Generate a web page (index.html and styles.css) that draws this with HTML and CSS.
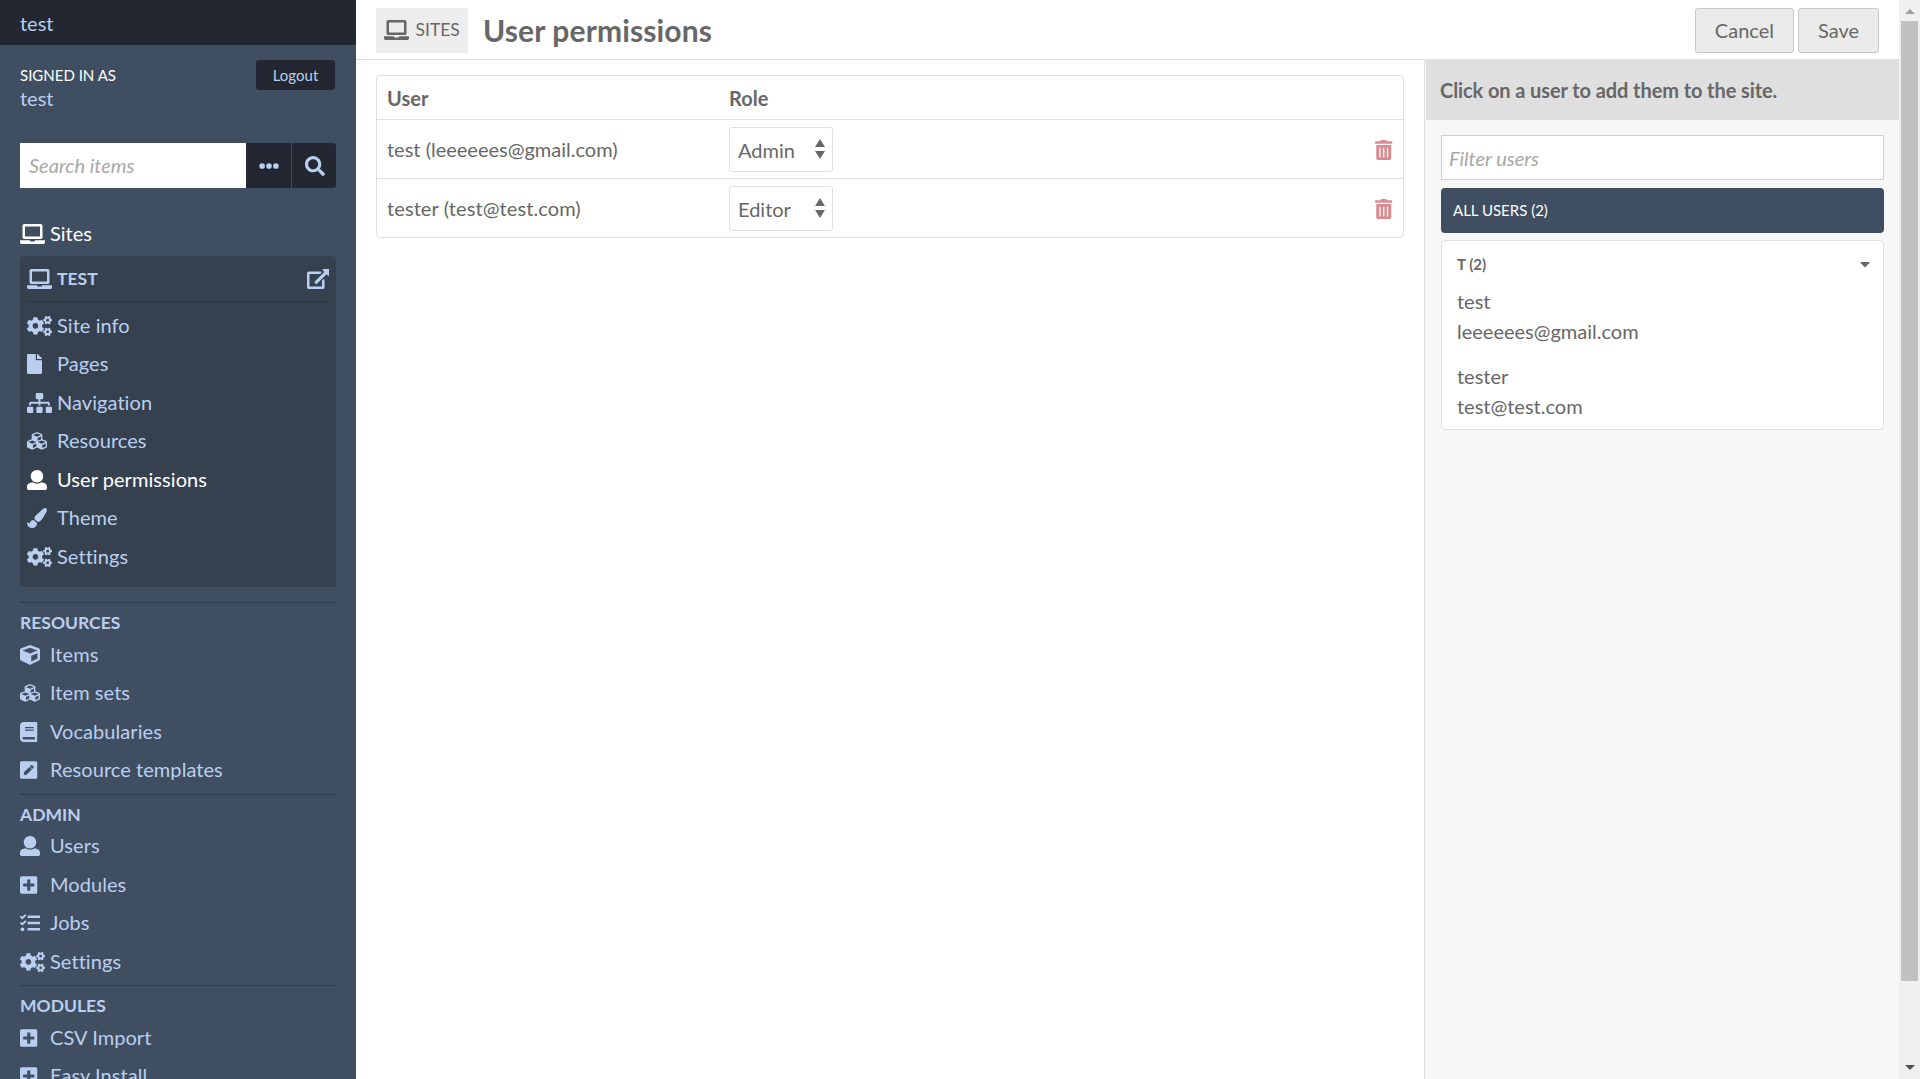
FILE: index.html
```html
<!DOCTYPE html>
<html lang="en">
<head>
<meta charset="utf-8">
<title>User permissions · test</title>
<link rel="stylesheet" href="styles.css">
</head>
<body>
<svg class="sprite" aria-hidden="true">
  <symbol id="laptop" viewBox="0 0 640 512"><path d="M512 64v256H128V64h384m16-64H112C85.500 0 64 21.500 64 48v288c0 26.500 21.500 48 48 48h416c26.500 0 48-21.500 48-48V48c0-26.500-21.500-48-48-48zm100 416H389.500c-3 0-5.500 2.100-5.900 5.100C381.200 436.300 368 448 352 448h-64c-16 0-29.200-11.700-31.600-26.900-.5-2.900-3-5.100-5.900-5.100H12c-6.600 0-12 5.400-12 12v36c0 26.500 21.500 48 48 48h544c26.500 0 48-21.500 48-48v-36c0-6.600-5.400-12-12-12z"/></symbol>
  <symbol id="external" viewBox="0 0 576 512"><path d="M576 24v127.984c0 21.461-25.960 31.980-40.971 16.971l-35.707-35.709-243.523 243.523c-9.373 9.373-24.568 9.373-33.941 0l-22.627-22.627c-9.373-9.373-9.373-24.569 0-33.941L442.756 76.676l-35.703-35.705C391.982 25.900 402.656 0 424.024 0H552c13.255 0 24 10.745 24 24zM407.029 270.794l-16 16A23.999 23.999 0 0 0 384 303.765V448H64V128h264a24.003 24.003 0 0 0 16.970-7.029l16-16C376.089 89.851 365.381 64 344 64H48C21.490 64 0 85.490 0 112v352c0 26.510 21.490 48 48 48h352c26.510 0 48-21.490 48-48V287.764c0-21.382-25.852-32.090-40.971-16.970z"/></symbol>
  <symbol id="cogs" viewBox="0 0 640 512"><path d="M512.1 191l-8.2 14.3c-3 5.3-9.4 7.5-15.1 5.4-11.8-4.4-22.6-10.7-32.1-18.6-4.6-3.8-5.8-10.5-2.8-15.7l8.2-14.3c-6.9-8-12.3-17.3-15.9-27.4h-16.5c-6 0-11.2-4.3-12.2-10.3-2-12-2.1-24.6 0-37.1 1-6 6.2-10.4 12.2-10.4h16.5c3.6-10.1 9-19.4 15.9-27.4l-8.2-14.3c-3-5.2-1.9-11.9 2.8-15.7 9.5-7.9 20.4-14.2 32.1-18.6 5.700-2.100 12.100.1 15.100 5.400l8.200 14.300c10.500-1.900 21.200-1.900 31.700 0L552 6.300c3-5.300 9.400-7.500 15.100-5.400 11.800 4.400 22.600 10.700 32.100 18.600 4.600 3.800 5.800 10.500 2.800 15.700l-8.200 14.300c6.900 8 12.300 17.300 15.900 27.400h16.500c6 0 11.200 4.300 12.200 10.300 2 12 2.100 24.600 0 37.100-1 6-6.200 10.400-12.200 10.400h-16.500c-3.600 10.100-9 19.400-15.900 27.400l8.200 14.300c3 5.200 1.900 11.900-2.800 15.700-9.500 7.900-20.400 14.200-32.100 18.600-5.700 2.100-12.100-.1-15.100-5.400l-8.200-14.300c-10.400 1.900-21.200 1.900-31.700 0zm-10.500-58.800c38.500 29.600 82.400-14.300 52.800-52.800-38.500-29.700-82.400 14.300-52.800 52.800zM386.300 286.100l33.700 16.800c10.100 5.800 14.500 18.100 10.500 29.100-8.900 24.200-26.400 46.400-42.600 65.800-7.400 8.900-20.200 11.100-30.300 5.300l-29.100-16.800c-16 13.700-34.600 24.600-54.900 31.700v33.600c0 11.600-8.300 21.600-19.700 23.600-24.600 4.200-50.400 4.400-75.900 0-11.500-2-20-11.900-20-23.600V418c-20.300-7.200-38.900-18-54.900-31.700L74 403c-10 5.800-22.900 3.600-30.300-5.300-16.200-19.400-33.300-41.600-42.200-65.700-4-10.900.4-23.200 10.500-29.100l33.300-16.800c-3.900-20.900-3.900-42.400 0-63.400L12 205.800c-10.100-5.800-14.600-18.100-10.500-29 8.900-24.200 26-46.400 42.200-65.800 7.400-8.900 20.200-11.100 30.300-5.300l29.100 16.800c16-13.700 34.600-24.600 54.900-31.700V57.100c0-11.500 8.200-21.500 19.600-23.500 24.600-4.200 50.500-4.400 76-.1 11.500 2 20 11.900 20 23.600v33.600c20.300 7.200 38.900 18 54.900 31.700l29.100-16.800c10-5.800 22.900-3.600 30.300 5.300 16.200 19.400 33.200 41.600 42.100 65.800 4 10.900.1 23.200-10 29.100l-33.700 16.800c3.900 21 3.900 42.500 0 63.500zm-117.600 21.100c59.200-77-28.700-164.900-105.700-105.700-59.200 77 28.700 164.900 105.700 105.700zm243.400 182.700l-8.200 14.300c-3 5.300-9.400 7.500-15.100 5.400-11.800-4.400-22.600-10.700-32.100-18.600-4.600-3.800-5.800-10.500-2.800-15.700l8.200-14.300c-6.900-8-12.300-17.300-15.900-27.400h-16.500c-6 0-11.200-4.300-12.200-10.300-2-12-2.100-24.600 0-37.100 1-6 6.200-10.400 12.200-10.400h16.500c3.600-10.100 9-19.400 15.900-27.400l-8.200-14.300c-3-5.200-1.900-11.900 2.800-15.700 9.500-7.900 20.400-14.200 32.100-18.600 5.700-2.100 12.100.1 15.100 5.400l8.200 14.300c10.500-1.900 21.200-1.900 31.700 0l8.200-14.300c3-5.300 9.400-7.500 15.100-5.400 11.800 4.400 22.600 10.700 32.100 18.600 4.600 3.800 5.800 10.500 2.800 15.700l-8.200 14.300c6.900 8 12.300 17.300 15.900 27.400h16.500c6 0 11.200 4.300 12.200 10.300 2 12 2.100 24.600 0 37.100-1 6-6.200 10.400-12.200 10.400h-16.500c-3.600 10.100-9 19.400-15.900 27.400l8.200 14.300c3 5.200 1.900 11.900-2.800 15.700-9.500 7.900-20.400 14.200-32.100 18.600-5.700 2.100-12.100-.1-15.100-5.400l-8.200-14.300c-10.400 1.900-21.200 1.900-31.700 0zM501.600 431c38.500 29.600 82.400-14.300 52.800-52.800-38.500-29.600-82.400 14.300-52.800 52.800z"/></symbol>
  <symbol id="file" viewBox="0 0 384 512"><path d="M224 136V0H24C10.700 0 0 10.700 0 24v464c0 13.300 10.700 24 24 24h336c13.300 0 24-10.700 24-24V160H248c-13.200 0-24-10.800-24-24zm160-14.100v6.100H256V0h6.100c6.400 0 12.500 2.500 17 7l97.900 98c4.500 4.500 7 10.600 7 16.900z"/></symbol>
  <symbol id="sitemap" viewBox="0 0 640 512"><path d="M128 352H32c-17.670 0-32 14.330-32 32v96c0 17.670 14.330 32 32 32h96c17.670 0 32-14.330 32-32v-96c0-17.670-14.330-32-32-32zm-24-80h192v48h48v-48h192v48h48v-57.590c0-21.170-17.230-38.410-38.410-38.410H344v-64h40c17.670 0 32-14.330 32-32V32c0-17.670-14.330-32-32-32H256c-17.670 0-32 14.330-32 32v96c0 17.670 14.330 32 32 32h40v64H94.410C73.230 224 56 241.230 56 262.410V320h48v-48zm264 80h-96c-17.670 0-32 14.330-32 32v96c0 17.670 14.330 32 32 32h96c17.670 0 32-14.330 32-32v-96c0-17.670-14.330-32-32-32zm240 0h-96c-17.670 0-32 14.330-32 32v96c0 17.670 14.330 32 32 32h96c17.670 0 32-14.330 32-32v-96c0-17.670-14.330-32-32-32z"/></symbol>
  <symbol id="cubes" viewBox="0 0 512 512"><path d="M488.600 250.200L392 214V105.500c0-15-9.300-28.400-23.400-33.700l-100-37.500c-8.100-3.100-17.100-3.100-25.300 0l-100 37.500c-14.100 5.300-23.400 18.700-23.400 33.700V214l-96.600 36.200C9.300 255.500 0 268.900 0 283.900V394c0 13.600 7.700 26.100 19.900 32.200l100 50c10.100 5.100 22.100 5.100 32.200 0l103.900-52 103.900 52c10.100 5.100 22.100 5.100 32.200 0l100-50c12.200-6.100 19.900-18.600 19.900-32.200V283.900c0-15-9.300-28.400-23.400-33.700zM358 214.800l-85 31.900v-68.200l85-37v73.300zM154 104.100l102-38.200 102 38.200v.6l-102 41.400-102-41.400v-.6zm84 291.100l-85 42.500v-79.100l85-38.800v75.400zm0-112l-102 41.400-102-41.400v-.6l102-38.200 102 38.200v.6zm240 112l-85 42.500v-79.100l85-38.800v75.400zm0-112l-102 41.400-102-41.400v-.6l102-38.200 102 38.200v.6z"/></symbol>
  <symbol id="cube" viewBox="0 0 512 512"><path d="M239.100 6.300l-208 78c-18.700 7-31.100 25-31.100 45v225.100c0 18.200 10.300 34.800 26.500 42.900l208 104c13.500 6.800 29.400 6.800 42.900 0l208-104c16.300-8.100 26.500-24.800 26.500-42.900V129.300c0-20-12.400-37.900-31.100-44.900l-208-78C262 2.200 250 2.200 239.100 6.300zM256 68.400l192 72v1.100l-192 78-192-78v-1.100l192-72zm32 356V275.500l160-65v133.900l-160 80z"/></symbol>
  <symbol id="user" viewBox="0 0 512 512"><path d="M256 0c88.366 0 160 71.634 160 160s-71.634 160-160 160S96 248.366 96 160 167.634 0 256 0zm183.283 333.821l-71.313-17.828c-74.923 53.890-165.738 41.864-223.940 0l-71.313 17.828C29.981 344.505 0 382.903 0 426.955V464c0 26.510 21.490 48 48 48h416c26.510 0 48-21.490 48-48v-37.045c0-44.052-29.981-82.450-72.717-93.134z"/></symbol>
  <symbol id="brush" viewBox="0 0 512 512"><path d="M167.020 309.340c-40.120 2.580-76.530 17.860-97.190 72.300-2.350 6.210-8 9.980-14.590 9.980-11.110 0-45.460-27.670-55.250-34.350C0 439.620 37.930 512 128 512c75.860 0 128-43.770 128-120.190 0-3.110-.65-6.080-.97-9.130l-88.010-73.340zM457.890 0c-15.160 0-29.370 6.710-40.210 16.450C213.270 199.050 192 203.340 192 257.090c0 13.700 3.250 26.760 8.730 38.700l63.820 53.180c7.210 1.800 14.640 3.030 22.390 3.030 62.110 0 98.110-45.470 211.160-256.460 7.380-14.350 13.900-29.850 13.900-45.990C512 20.640 486 0 457.890 0z"/></symbol>
  <symbol id="book" viewBox="0 0 448 512"><path d="M448 360V24c0-13.300-10.700-24-24-24H96C43 0 0 43 0 96v320c0 53 43 96 96 96h328c13.300 0 24-10.700 24-24v-16c0-7.500-3.500-14.300-8.900-18.700-4.200-15.400-4.200-59.300 0-74.700 5.400-4.300 8.900-11.100 8.900-18.600zM128 134c0-3.300 2.700-6 6-6h212c3.300 0 6 2.700 6 6v20c0 3.300-2.700 6-6 6H134c-3.300 0-6-2.700-6-6v-20zm0 64c0-3.300 2.700-6 6-6h212c3.300 0 6 2.700 6 6v20c0 3.300-2.700 6-6 6H134c-3.300 0-6-2.700-6-6v-20zm253.400 250H96c-17.700 0-32-14.300-32-32 0-17.600 14.400-32 32-32h285.400c-1.900 17.100-1.900 46.900 0 64z"/></symbol>
  <symbol id="pen" viewBox="0 0 448 512"><path d="M400 480H48c-26.500 0-48-21.500-48-48V80c0-26.500 21.500-48 48-48h352c26.500 0 48 21.500 48 48v352c0 26.500-21.500 48-48 48zM238.100 177.900L102.400 313.600l-6.300 57.100c-.8 7.600 5.600 14.100 13.300 13.300l57.100-6.300L302.200 242c2.300-2.300 2.300-6.100 0-8.500L246.700 178c-2.500-2.400-6.300-2.400-8.600-.1zM345 165.100L314.900 135c-9.400-9.400-24.600-9.400-33.900 0l-23.100 23.100c-2.300 2.300-2.300 6.100 0 8.500l55.500 55.500c2.300 2.300 6.100 2.300 8.500 0L345 199c9.300-9.300 9.300-24.500 0-33.900z"/></symbol>
  <symbol id="plus" viewBox="0 0 448 512"><path d="M400 32H48C21.500 32 0 53.500 0 80v352c0 26.500 21.500 48 48 48h352c26.500 0 48-21.500 48-48V80c0-26.500-21.500-48-48-48zm-32 252c0 6.600-5.400 12-12 12h-92v92c0 6.600-5.400 12-12 12h-56c-6.600 0-12-5.400-12-12v-92H92c-6.600 0-12-5.400-12-12v-56c0-6.600 5.400-12 12-12h92v-92c0-6.600 5.400-12 12-12h56c6.600 0 12 5.400 12 12v92h92c6.600 0 12 5.400 12 12v56z"/></symbol>
  <symbol id="tasks" viewBox="0 0 512 512"><path d="M139.610 35.500a12 12 0 0 0-17 0L58.930 98.810l-22.700-22.120a12 12 0 0 0-17 0L3.530 92.410a12 12 0 0 0 0 17l47.590 47.400a12.780 12.780 0 0 0 17.610 0l15.590-15.620L156.520 69a12.090 12.090 0 0 0 .09-17zm0 159.190a12 12 0 0 0-17 0l-63.680 63.720-22.700-22.100a12 12 0 0 0-17 0L3.530 252a12 12 0 0 0 0 17L51 316.500a12.770 12.770 0 0 0 17.600 0l15.700-15.690 72.200-72.220a12 12 0 0 0 .09-16.900zM64 368c-26.490 0-48.590 21.500-48.590 48S37.530 464 64 464a48 48 0 0 0 0-96zm432 16H208a16 16 0 0 0-16 16v32a16 16 0 0 0 16 16h288a16 16 0 0 0 16-16v-32a16 16 0 0 0-16-16zm0-320H208a16 16 0 0 0-16 16v32a16 16 0 0 0 16 16h288a16 16 0 0 0 16-16V80a16 16 0 0 0-16-16zm0 160H208a16 16 0 0 0-16 16v32a16 16 0 0 0 16 16h288a16 16 0 0 0 16-16v-32a16 16 0 0 0-16-16z"/></symbol>
  <symbol id="search" viewBox="0 0 512 512"><path d="M505 442.700L405.300 343c-4.500-4.500-10.600-7-17-7H372c27.600-35.300 44-79.700 44-128C416 93.100 322.900 0 208 0S0 93.100 0 208s93.100 208 208 208c48.300 0 92.700-16.400 128-44v16.300c0 6.400 2.500 12.500 7 17l99.700 99.700c9.400 9.400 24.600 9.400 33.900 0l28.300-28.300c9.400-9.400 9.400-24.600.1-34zM208 336c-70.700 0-128-57.200-128-128 0-70.700 57.200-128 128-128 70.700 0 128 57.200 128 128 0 70.700-57.200 128-128 128z"/></symbol>
  <symbol id="dots" viewBox="0 0 512 512"><circle cx="80" cy="256" r="72"/><circle cx="256" cy="256" r="72"/><circle cx="432" cy="256" r="72"/></symbol>
  <symbol id="trash" viewBox="0 0 448 512"><path d="M0 84V56c0-13.300 10.700-24 24-24h112l9.400-18.700c4-8.200 12.300-13.300 21.400-13.300h114.300c9.100 0 17.400 5.100 21.500 13.300L312 32h112c13.300 0 24 10.700 24 24v28c0 6.600-5.400 12-12 12H12C5.400 96 0 90.600 0 84zm416 56v324c0 26.500-21.500 48-48 48H80c-26.500 0-48-21.500-48-48V140c0-6.600 5.400-12 12-12h360c6.600 0 12 5.400 12 12zm-272 68c0-8.800-7.200-16-16-16s-16 7.200-16 16v224c0 8.800 7.200 16 16 16s16-7.200 16-16V208zm96 0c0-8.800-7.200-16-16-16s-16 7.200-16 16v224c0 8.800 7.200 16 16 16s16-7.200 16-16V208zm96 0c0-8.800-7.200-16-16-16s-16 7.200-16 16v224c0 8.800 7.200 16 16 16s16-7.200 16-16V208z"/></symbol>
  <symbol id="caret" viewBox="0 0 320 512"><path d="M31.300 192h257.300c17.800 0 26.700 21.500 14.100 34.100L174.100 354.800c-7.800 7.800-20.500 7.800-28.300 0L17.200 226.100C4.600 213.500 13.500 192 31.300 192z"/></symbol>
  <symbol id="sort" viewBox="0 0 10 20"><path d="M5 0l5 8H0zM0 12h10l-5 8z"/></symbol>
</svg>
<div class="app">
  <aside class="sidebar">
    <div class="brand">test</div>
    <div class="account">
      <div><div class="signed">SIGNED IN AS</div><div class="name">test</div></div>
      <a class="logout">Logout</a>
    </div>
    <div class="search">
      <div class="search-input">Search items</div>
      <div class="search-btn"><svg class="i20"><use href="#dots"/></svg></div>
      <div class="search-btn last"><svg class="i20"><use href="#search"/></svg></div>
    </div>
    <a class="sites"><svg class="i25"><use href="#laptop"/></svg>Sites</a>
    <div class="site">
      <div class="site-title"><svg class="i25"><use href="#laptop"/></svg><b>TEST</b><svg class="i22"><use href="#external"/></svg></div>
      <a class="nav"><span><svg class="i25"><use href="#cogs"/></svg></span>Site info</a>
      <a class="nav"><span><svg class="i15"><use href="#file"/></svg></span>Pages</a>
      <a class="nav"><span><svg class="i25"><use href="#sitemap"/></svg></span>Navigation</a>
      <a class="nav"><span><svg class="i20"><use href="#cubes"/></svg></span>Resources</a>
      <a class="nav active"><span><svg class="i20"><use href="#user"/></svg></span>User permissions</a>
      <a class="nav"><span><svg class="i20"><use href="#brush"/></svg></span>Theme</a>
      <a class="nav"><span><svg class="i25"><use href="#cogs"/></svg></span>Settings</a>
    </div>
    <div class="group">
      <h4>RESOURCES</h4>
      <a class="nav"><span><svg class="i20"><use href="#cube"/></svg></span>Items</a>
      <a class="nav"><span><svg class="i20"><use href="#cubes"/></svg></span>Item sets</a>
      <a class="nav"><span><svg class="i17"><use href="#book"/></svg></span>Vocabularies</a>
      <a class="nav"><span><svg class="i17"><use href="#pen"/></svg></span>Resource templates</a>
    </div>
    <div class="group">
      <h4>ADMIN</h4>
      <a class="nav"><span><svg class="i20"><use href="#user"/></svg></span>Users</a>
      <a class="nav"><span><svg class="i17"><use href="#plus"/></svg></span>Modules</a>
      <a class="nav"><span><svg class="i20"><use href="#tasks"/></svg></span>Jobs</a>
      <a class="nav"><span><svg class="i25"><use href="#cogs"/></svg></span>Settings</a>
    </div>
    <div class="group">
      <h4>MODULES</h4>
      <a class="nav"><span><svg class="i17"><use href="#plus"/></svg></span>CSV Import</a>
      <a class="nav"><span><svg class="i17"><use href="#plus"/></svg></span>Easy Install</a>
    </div>
  </aside>
  <div class="page">
    <header>
      <a class="crumb"><svg class="i25"><use href="#laptop"/></svg>SITES</a>
      <h1>User permissions</h1>
      <div class="actions"><a class="button">Cancel</a><a class="button">Save</a></div>
    </header>
    <div class="content">
      <main>
        <div class="table">
          <div class="row head"><div>User</div><div>Role</div></div>
          <div class="row"><div>test (leeeeees@gmail.com)</div><div class="select">Admin<svg class="sort"><use href="#sort"/></svg></div><svg class="i17 trash"><use href="#trash"/></svg></div>
          <div class="row"><div class="wide">tester (test@test.com)</div><div class="select">Editor<svg class="sort"><use href="#sort"/></svg></div><svg class="i17 trash"><use href="#trash"/></svg></div>
        </div>
      </main>
      <section class="panel">
        <h3>Click on a user to add them to the site.</h3>
        <div class="panel-body">
          <div class="filter">Filter users</div>
          <div class="all">ALL USERS (2)</div>
          <div class="users">
            <div class="letter">T (2)<svg class="caret"><use href="#caret"/></svg></div>
            <div class="user">test<br>leeeeees@gmail.com</div>
            <div class="user">tester<br>test@test.com</div>
          </div>
        </div>
      </section>
    </div>
  </div>
  <div class="scrollbar"><i class="up"></i><div class="thumb"></div><i class="down"></i></div>
</div>
</body>
</html>
```
FILE: styles.css
```css
* { box-sizing: border-box; }
body { margin: 0; font: 20px/30px Lato, sans-serif; color: #676767; background: #fff; overflow: hidden; }
svg { display: block; fill: currentColor; flex: none; height: 20px; }
.sprite { display: none; }
.i25 { width: 25px; }
.i22 { width: 22.5px; }
.i20 { width: 20px; }
.i17 { width: 17.5px; }
.i15 { width: 15px; }
.app { display: flex; height: 1079px; overflow: hidden; }

.sidebar { width: 356px; flex: none; background: #404e61; color: #bacfef; overflow: hidden; }
.brand { height: 45px; padding: 8px 20px 0; background: #222731; }
.account { display: flex; justify-content: space-between; align-items: flex-start; padding: 15px 21px 0 20px; height: 98px; }
.signed { font-size: 15px; line-height: 30px; color: #fff; }
.name { line-height: 20px; margin-top: -2px; }
.logout { width: 79px; height: 30px; line-height: 30px; font-size: 15px; text-align: center; border-radius: 3px; background: #222731; }
.search { display: flex; margin: 0 20px; height: 45px; }
.search-input { flex: 1; background: #fff; color: #a8a8a8; font-style: italic; padding: 7px 9px; }
.search-btn { width: 45px; display: flex; align-items: center; justify-content: center; background: #222731; }
.search-btn.last { border-left: 1px solid #404e61; border-radius: 0 3px 3px 0; padding-left: 1px; }
.sites { display: flex; align-items: center; gap: 5px; margin: 30px 20px 7px; height: 31px; padding-bottom: 1px; color: #fff; }
.sites svg { margin-top: 2px; }
.site { margin: 0 20px; height: 330.500px; padding: 0 7px; background: #364150; border-radius: 4px; }
.site-title { display: flex; align-items: center; gap: 5px; height: 46px; border-bottom: 1px solid #2c3542; margin-bottom: 4.500px; font-size: 17.500px; }
.site-title .i22 { margin-left: auto; }
.nav { display: flex; align-items: center; height: 38.500px; padding-bottom: 2px; letter-spacing: .06px; }
.nav span { width: 30px; }
.nav svg { margin-top: 1.500px; }
.active { color: #fff; }
.group { margin: 0 20px; height: 191.500px; border-top: 1px solid #313c4b; }
.site + .group { margin-top: 15.500px; }
h4 { margin: 0; height: 32.500px; padding-top: 5px; font-size: 17.500px; }

.page { flex: 1; display: flex; flex-direction: column; }
header { display: flex; align-items: center; height: 60px; padding: 0 20px; border-bottom: 1px solid #dfdfdf; }
.crumb { display: flex; align-items: center; gap: 7px; width: 92px; height: 45px; padding-left: 7.500px; margin-top: 1px; background: #ededed; font-size: 17.500px; }
h1 { margin: 0 0 0 15px; font-size: 30px; letter-spacing: .13px; }
.actions { display: flex; gap: 4px; margin: 1px 0 0 auto; }
.button { height: 45px; line-height: 43px; padding: 0 19px; background: #ebebeb; border: 1px solid #c8c8c8; border-radius: 3px; }
.content { flex: 1; display: flex; }
main { flex: 1; padding: 15px 20px; }
.table { border: 1px solid #dfdfdf; border-radius: 4px; }
.row { display: grid; grid-template-columns: 342px 104px 1fr; align-items: center; height: 59px; padding: 0 10px; border-top: 1px solid #dfdfdf; }
.head { height: 43px; border: 0; font-weight: bold; }
.wide { letter-spacing: .1px; }
.select { display: flex; justify-content: space-between; align-items: center; height: 45px; padding: 2px 7px 0 8px; border: 1px solid #dfdfdf; border-radius: 3px; }
.sort { width: 10px; height: 20px; margin-top: -2px; }
.trash { color: #d98c8f; justify-self: end; margin: 1px .5px 0 0; }

.panel { width: 475px; border-left: 1px solid #dfdfdf; background: #f7f7f7; }
h3 { margin: 0 0 0 1px; height: 60px; padding: 15px 14px; font-size: 20px; line-height: 30px; letter-spacing: -.09px; background: #dfdfdf; }
.panel-body { padding: 15px 15px 0 16px; }
.filter { height: 45px; padding: 7px 7px; background: #fff; border: 1px solid #d0d0d0; color: #a8a8a8; font-style: italic; }
.all { height: 45px; margin: 8px 0 7px; padding: 0 12px; line-height: 44px; font-size: 15px; color: #fff; background: #404e61; border-radius: 4px; }
.users { height: 190px; padding: 8px 14px 0 15px; background: #fff; border: 1px solid #dfdfdf; border-radius: 4px; }
.letter { display: flex; justify-content: space-between; align-items: center; height: 30px; font-size: 15px; font-weight: bold; }
.caret { width: 10px; height: 16px; margin-right: -1px; }
.user { padding: 7px 0 8px; }

.scrollbar { width: 21px; padding: 9px 2px; background: #f0f0f0; display: flex; flex-direction: column; align-items: center; }
.thumb { width: 17px; height: 960px; margin: 7px 0 auto; background: #c1c1c1; }
.up { border: 5px solid transparent; border-top: 0; border-bottom-color: #a0a0a0; }
.down { border: 5px solid transparent; border-bottom: 0; border-top-color: #505050; }
```
